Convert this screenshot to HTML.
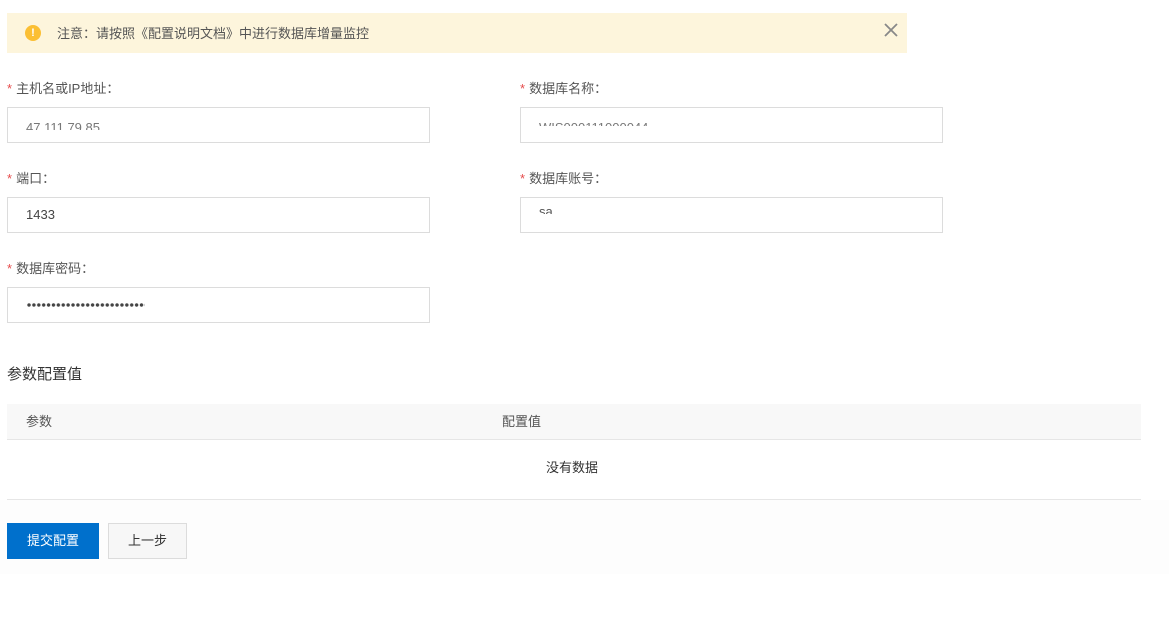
<!DOCTYPE html>
<html><head><meta charset="utf-8"><style>
*{margin:0;padding:0;box-sizing:border-box}
body{width:1169px;height:622px;background:#fff;font-family:"Liberation Sans","Noto Sans CJK SC",sans-serif;font-size:13px;color:#333;position:relative;overflow:hidden}
.a{position:absolute}
.lbl{position:absolute;font-size:13px;color:#555;line-height:16px}
.lbl b{color:#e64b4b;font-weight:normal;margin-right:4px}
.inp{position:absolute;width:423px;height:36px;border:1px solid #dcdcdc;background:#fff}
.clip{position:absolute;left:18px;top:11px;height:10px;overflow:hidden;font-size:13px;line-height:16px;color:#444}
.dots{position:absolute;left:19px;top:15px;height:4px;width:118px;background:radial-gradient(circle at 2px 2px,#444 1.6px,transparent 1.9px) 0 0/4.9px 4px repeat-x}
</style></head><body>
<div class="a" style="left:0;top:500px;width:1169px;height:74px;background:#fdfdfd"></div>
<div class="a" style="left:7px;top:13px;width:900px;height:40px;background:#fdf5dc"></div>
<div class="a" style="left:25px;top:25px;width:16px;height:16px;border-radius:50%;background:#fbbf33;color:#fff;font-size:11px;font-weight:bold;text-align:center;line-height:16px">!</div>
<div class="a" style="left:57px;top:25px;font-size:13px;color:#555;line-height:17px">注意：请按照《配置说明文档》中进行数据库增量监控</div>
<svg class="a" style="left:884px;top:23px" width="14" height="14" viewBox="0 0 14 14"><path d="M1 1L13 13M13 1L1 13" stroke="#888" stroke-width="1.8"/></svg>

<div class="lbl" style="left:7px;top:81px"><b>*</b>主机名或IP地址：</div>
<div class="inp" style="left:7px;top:107px"><div class="clip" style="top:12px;height:10px;color:#777">47.111.79.85</div></div>
<div class="lbl" style="left:520px;top:81px"><b>*</b>数据库名称：</div>
<div class="inp" style="left:520px;top:107px"><div class="clip" style="top:12px;height:6px;color:#777">WIS000111000044</div></div>

<div class="lbl" style="left:7px;top:171px"><b>*</b>端口：</div>
<div class="inp" style="left:7px;top:197px"><div style="position:absolute;left:18px;top:9px;line-height:16px;color:#444">1433</div></div>
<div class="lbl" style="left:520px;top:171px"><b>*</b>数据库账号：</div>
<div class="inp" style="left:520px;top:197px"><div class="clip" style="top:6px;height:10px;color:#555">sa</div></div>

<div class="lbl" style="left:7px;top:261px"><b>*</b>数据库密码：</div>
<div class="inp" style="left:7px;top:287px"><div class="dots"></div></div>

<div class="a" style="left:7px;top:365px;font-size:15px;color:#333;line-height:20px">参数配置值</div>
<div class="a" style="left:7px;top:404px;width:1134px;height:36px;background:#f8f8f8;border-bottom:1px solid #e6e6e6"></div>
<div class="a" style="left:26px;top:413px;color:#555;line-height:17px">参数</div>
<div class="a" style="left:502px;top:413px;color:#555;line-height:17px">配置值</div>
<div class="a" style="left:7px;top:440px;width:1134px;height:60px;background:#fff;border-bottom:1px solid #e6e6e6"></div>
<div class="a" style="left:546px;top:459px;color:#333;line-height:17px">没有数据</div>

<div class="a" style="left:7px;top:523px;width:92px;height:36px;background:#0070cc;color:#fff;text-align:center;line-height:36px">提交配置</div>
<div class="a" style="left:108px;top:523px;width:79px;height:36px;background:#f7f7f7;border:1px solid #dcdcdc;color:#333;text-align:center;line-height:34px">上一步</div>
</body></html>
